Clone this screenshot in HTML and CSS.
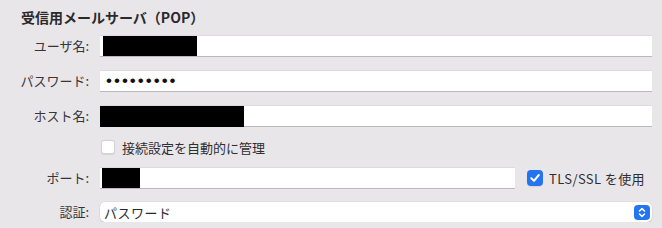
FILE: index.html
```html
<!DOCTYPE html>
<html lang="ja">
<head>
    <meta charset="UTF-8">
    <title>受信用メールサーバ（POP）</title>
    <link rel="stylesheet" href="styles.css">
</head>
<body>
    <div class="panel">
        <h2 class="section-title">受信用メールサーバ（POP）</h2>

        <div class="form-grid">
            <label class="field-label">ユーザ名:</label>
            <div class="text-field"><span class="redact redact-user"></span></div>

            <label class="field-label">パスワード:</label>
            <div class="text-field"><span class="dots">•••••••••</span></div>

            <label class="field-label">ホスト名:</label>
            <div class="text-field"><span class="redact redact-host"></span></div>

            <span></span>
            <div class="check-row">
                <span class="checkbox"></span>
                <span class="check-text">接続設定を自動的に管理</span>
            </div>

            <label class="field-label">ポート:</label>
            <div class="port-row">
                <div class="text-field port-field"><span class="redact redact-port"></span></div>
                <div class="check-row tls">
                    <span class="checkbox checked">
                        <svg width="14" height="14" viewBox="0 0 14 14">
                            <path d="M3.3 7.2 L6 9.9 L10.8 4" fill="none" stroke="#fff" stroke-width="2" stroke-linecap="round" stroke-linejoin="round"/>
                        </svg>
                    </span>
                    <span class="check-text">TLS/SSL を使用</span>
                </div>
            </div>

            <label class="field-label">認証:</label>
            <div class="popup">
                <span class="popup-value">パスワード</span>
                <span class="stepper">
                    <svg width="16" height="15" viewBox="0 0 16 15">
                        <path d="M5.5 6 L8 3.6 L10.5 6" fill="none" stroke="#fff" stroke-width="1.5" stroke-linecap="round" stroke-linejoin="round"/>
                        <path d="M5.5 9 L8 11.4 L10.5 9" fill="none" stroke="#fff" stroke-width="1.5" stroke-linecap="round" stroke-linejoin="round"/>
                    </svg>
                </span>
            </div>
        </div>
    </div>
</body>
</html>
```

FILE: styles.css
```css
body {
    margin: 0;
    background-color: #e9e6ea;
    font-family: "Noto Sans CJK JP", "Noto Sans", sans-serif;
    color: #2b2a2c;
}
.panel {
    padding: 8px 10px 0 20px;
}
.section-title {
    margin: 0 0 0 1px;
    font-size: 14px;
    font-weight: bold;
    line-height: 18px;
    color: #2a292b;
}
.form-grid {
    display: grid;
    grid-template-columns: 69px 1fr;
    grid-template-rows: 22px 22px 22px 14px 22px 20px;
    column-gap: 11px;
    row-gap: 13px;
    margin-top: 9px;
    align-items: center;
}
.field-label {
    text-align: right;
    white-space: nowrap;
    font-size: 13px;
    line-height: 18px;
    color: #363537;
}
.text-field {
    height: 22px;
    box-sizing: border-box;
    background: #fff;
    border-top: 1px solid #dedbe0;
    border-bottom: 1px solid #bdb8bf;
    display: flex;
    align-items: center;
}
.redact {
    display: inline-block;
    background: #000;
}
.redact-user {
    width: 94px;
    height: 20px;
    margin-left: 3px;
}
.redact-host {
    width: 144px;
    height: 21px;
}
.redact-port {
    width: 38px;
    height: 20px;
    margin-left: 2px;
}
.dots {
    font-family: "Liberation Sans", sans-serif;
    font-size: 17px;
    letter-spacing: 2px;
    margin-left: 6px;
    color: #111;
    line-height: 18px;
}
.check-row {
    display: flex;
    align-items: center;
    height: 18px;
}
.checkbox {
    width: 14px;
    height: 14px;
    box-sizing: border-box;
    border-radius: 3px;
    background: #fff;
    border: 1px solid #d6d2d8;
    box-shadow: 0 0.5px 1px rgba(0,0,0,0.08);
    margin-left: 1px;
    flex: none;
}
.checkbox.checked {
    width: 16px;
    height: 16px;
    background: #2474f2;
    border: none;
    border-radius: 4px;
    display: flex;
    align-items: center;
    justify-content: center;
}
.check-text {
    font-size: 13px;
    margin-left: 7px;
    color: #2f2e30;
}
.port-row {
    display: flex;
    align-items: center;
}
.port-field {
    flex: 1;
}
.tls {
    margin-left: 11px;
    margin-right: 7px;
}
.tls .check-text {
    margin-left: 6px;
    letter-spacing: 0.4px;
}
.popup {
    height: 20px;
    background: #fff;
    border-radius: 5px;
    box-shadow: 0 0 0 0.5px rgba(0,0,0,0.08), 0 1px 1px rgba(0,0,0,0.12);
    display: flex;
    align-items: center;
    justify-content: space-between;
}
.popup-value {
    font-size: 13px;
    margin-left: 4px;
    letter-spacing: 0.5px;
    color: #2b2a2c;
}
.stepper {
    width: 16px;
    height: 15px;
    background: #2474f2;
    border-radius: 4px;
    margin-right: 2px;
    display: flex;
}
```
